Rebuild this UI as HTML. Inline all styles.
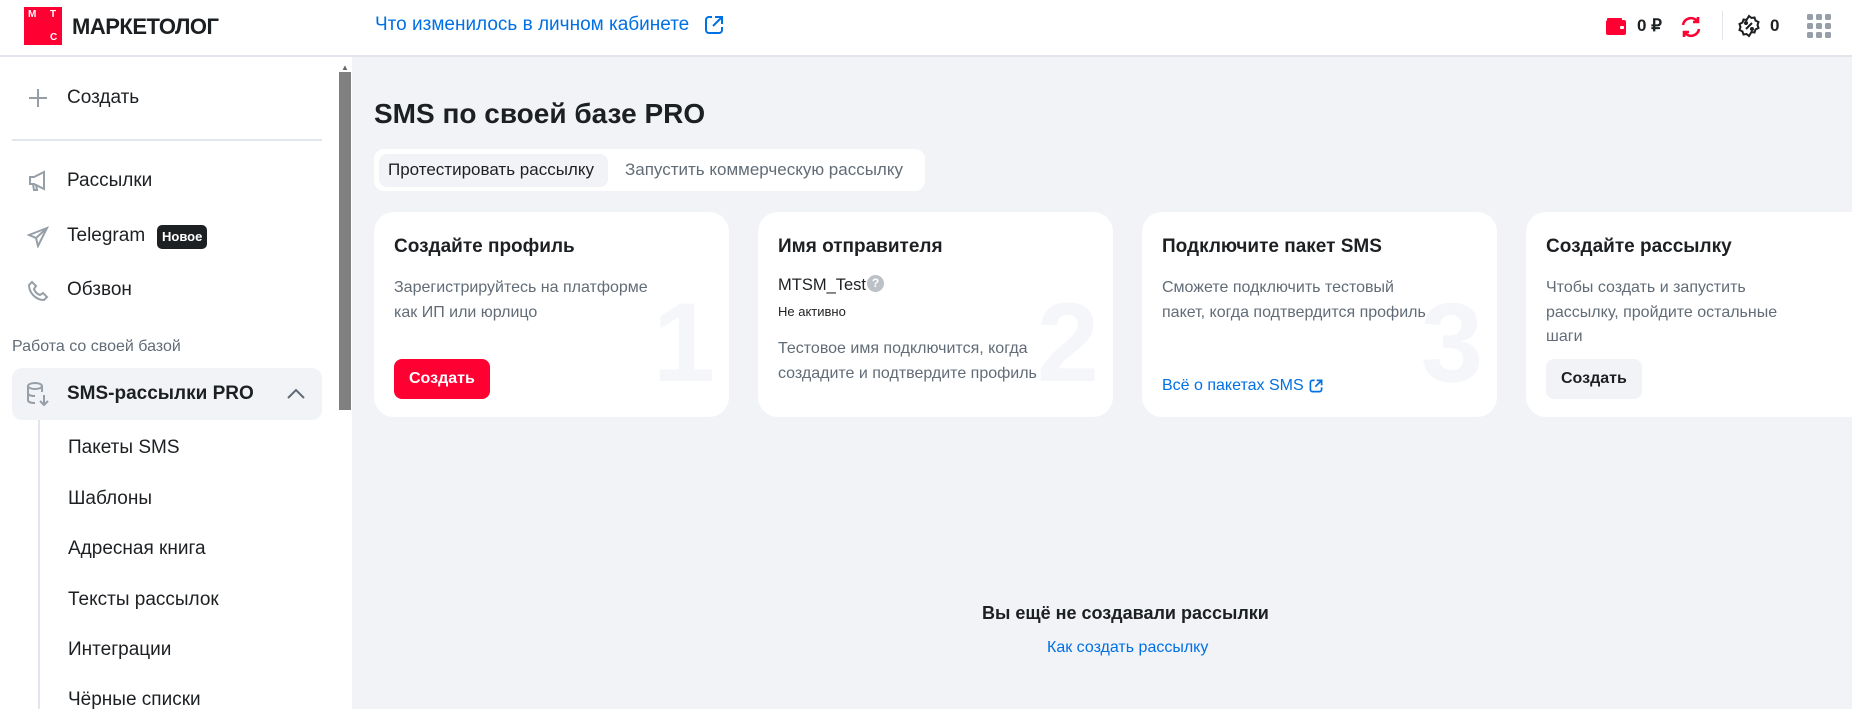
<!DOCTYPE html>
<html><head><meta charset="utf-8"><style>
*{box-sizing:border-box;margin:0;padding:0}
html,body{overflow:hidden}
body{width:1852px;height:709px;font-family:"Liberation Sans","Noto Sans CJK SC",sans-serif;color:#1d2023;background:#f2f3f7;position:relative}
.a{position:absolute;white-space:nowrap}
header{position:absolute;left:0;top:0;width:1852px;height:57px;background:#fff;border-bottom:2px solid #e2e5eb}
.side{position:absolute;left:0;top:57px;width:352px;height:670px;background:#fff}
.si{font-size:19px;color:#1d2023}
.card{position:absolute;top:212px;width:355px;height:205px;background:#fff;border-radius:20px;overflow:hidden}
.ct{position:absolute;left:20px;top:24px;font-size:19px;font-weight:bold}
.cd{position:absolute;left:20px;top:64px;font-size:16px;line-height:24.5px;color:#626c77}
.num{position:absolute;right:14px;bottom:18px;font-size:112px;font-weight:bold;color:#f5f6f9;line-height:1}
.btn{position:absolute;left:20px;top:147px;height:40px;padding:0 15px;border-radius:8px;font-size:16px;font-weight:bold;line-height:40px}
</style></head><body>
<header>
 <div class="a" style="left:24px;top:7px;width:38px;height:38px;background:#ff0032;color:#fff;font-size:10px;font-weight:bold">
  <span class="a" style="left:4px;top:2px">М</span><span class="a" style="left:26px;top:2px">Т</span><span class="a" style="left:26px;top:25px">С</span></div>
 <div class="a" style="left:72px;top:14px;font-size:22px;font-weight:bold;letter-spacing:-0.5px">МАРКЕТОЛОГ</div>
 <div class="a" style="left:375px;top:14px;font-size:19px;color:#0070e5">Что изменилось в личном кабинете</div>
 <svg class="a" style="left:704px;top:15px" width="20" height="20" viewBox="0 0 20 20" fill="none" stroke="#0070e5" stroke-width="2"><path d="M8 2H5a3 3 0 0 0-3 3v10a3 3 0 0 0 3 3h10a3 3 0 0 0 3-3v-3"/><path d="M11 2h7v7M18 2l-9 9"/></svg>
 <svg class="a" style="left:1606px;top:18px" width="20" height="17" viewBox="0 0 20 17"><rect x="0" y="2" width="20" height="15" rx="2" fill="#ff0032"/><rect x="1" y="0" width="15" height="4" rx="1" fill="#ff0032"/><rect x="14" y="8" width="4" height="3" rx="1" fill="#fff"/></svg>
 <div class="a" style="left:1637px;top:16px;font-size:17px;font-weight:bold">0 ₽</div>
 <svg class="a" style="left:1679px;top:15px" width="24" height="24" viewBox="0 0 24 24" fill="none" stroke="#ff0032" stroke-width="2.6"><path d="M4 10a8 8 0 0 1 14-4"/><path d="M20 14a8 8 0 0 1-14 4"/><path d="M19 2v5h-5M5 22v-5h5"/></svg>
 <div class="a" style="left:1722px;top:11px;width:1px;height:29px;background:#e2e5eb"></div>
 <svg class="a" style="left:1737px;top:14px" width="24" height="24" viewBox="0 0 24 24" fill="none" stroke="#1d2023" stroke-width="2"><path d="M12 2l2.5 2 3-.5 1 3 3 1.5-1 3 1 3-3 1.5-1 3-3-.5L12 22l-2.5-2-3 .5-1-3-3-1.5 1-3-1-3 3-1.5 1-3 3 .5z"/><path d="M9 15l6-6"/><circle cx="9" cy="9" r="1" fill="#1d2023"/><circle cx="15" cy="15" r="1" fill="#1d2023"/></svg>
 <div class="a" style="left:1770px;top:16px;font-size:17px;font-weight:bold">0</div>
 <svg class="a" style="left:1807px;top:14px" width="24" height="24" viewBox="0 0 24 24" fill="#969fa8"><rect x="0" y="0" width="6" height="6" rx="1.5"/><rect x="9" y="0" width="6" height="6" rx="1.5"/><rect x="18" y="0" width="6" height="6" rx="1.5"/><rect x="0" y="9" width="6" height="6" rx="1.5"/><rect x="9" y="9" width="6" height="6" rx="1.5"/><rect x="18" y="9" width="6" height="6" rx="1.5"/><rect x="0" y="18" width="6" height="6" rx="1.5"/><rect x="9" y="18" width="6" height="6" rx="1.5"/><rect x="18" y="18" width="6" height="6" rx="1.5"/></svg>
</header>
<div class="side">
 <div class="a" style="left:339px;top:15px;width:12px;height:338px;background:#808080"></div>
 <div class="a" style="left:341px;top:6px;font-size:8px;color:#666">▲</div>
 <svg class="a" style="left:28px;top:31px" width="20" height="20" viewBox="0 0 20 20" stroke="#969fa8" stroke-width="2"><path d="M10 1v18M1 10h18"/></svg>
 <div class="a si" style="left:67px;top:30px">Создать</div>
 <div class="a" style="left:12px;top:82px;width:310px;height:2px;background:#e2e5eb"></div>
 <svg class="a" style="left:27px;top:113px" width="22" height="22" viewBox="0 0 22 22" fill="none" stroke="#969fa8" stroke-width="2"><path d="M3 7h4l10-5v17L7 14H3z"/><path d="M6 14l1 6h3l-1-6"/></svg>
 <div class="a si" style="left:67px;top:113px">Рассылки</div>
 <svg class="a" style="left:27px;top:169px" width="22" height="22" viewBox="0 0 22 22" fill="none" stroke="#969fa8" stroke-width="2"><path d="M20 2L2 9l7 3 2 8z"/><path d="M9 12l11-10"/></svg>
 <div class="a si" style="left:67px;top:168px">Telegram</div>
 <div class="a" style="left:157px;top:168px;height:24px;padding:0 5px;background:#1d2023;color:#fff;border-radius:5px;font-size:13px;font-weight:bold;line-height:24px">Новое</div>
 <svg class="a" style="left:27px;top:223px" width="22" height="22" viewBox="0 0 22 22" fill="none" stroke="#969fa8" stroke-width="2"><path d="M5 2l4 4-2 3c1 3 3 5 6 6l3-2 4 4-3 3C9 20 2 13 2 5z"/></svg>
 <div class="a si" style="left:67px;top:222px">Обзвон</div>
 <div class="a" style="left:12px;top:281px;font-size:16px;color:#626c77">Работа со своей базой</div>
 <div class="a" style="left:12px;top:311px;width:310px;height:52px;background:#f2f3f7;border-radius:10px"></div>
 <svg class="a" style="left:26px;top:324px" width="24" height="26" viewBox="0 0 24 26" fill="none" stroke="#969fa8" stroke-width="2"><ellipse cx="9" cy="5" rx="7" ry="3"/><path d="M2 5v14c0 2 3 3 7 3M16 5v6M2 12c0 2 3 3 7 3"/><path d="M18 14v10M14 20l4 4 4-4"/></svg>
 <div class="a" style="left:67px;top:326px;font-size:19px;font-weight:bold">SMS-рассылки PRO</div>
 <svg class="a" style="left:287px;top:331px" width="18" height="12" viewBox="0 0 18 12" fill="none" stroke="#626c77" stroke-width="2"><path d="M1 10l8-8 8 8"/></svg>
 <div class="a" style="left:38px;top:363px;width:2px;height:300px;background:#e2e5eb"></div>
 <div class="a si" style="left:68px;top:380px">Пакеты SMS</div>
 <div class="a si" style="left:68px;top:431px">Шаблоны</div>
 <div class="a si" style="left:68px;top:481px">Адресная книга</div>
 <div class="a si" style="left:68px;top:532px">Тексты рассылок</div>
 <div class="a si" style="left:68px;top:582px">Интеграции</div>
 <div class="a si" style="left:68px;top:632px">Чёрные списки</div>
</div>
<div class="a" style="left:374px;top:98px;font-size:28px;font-weight:bold">SMS по своей базе PRO</div>
<div class="a" style="left:374px;top:149px;width:551px;height:42px;background:#fff;border-radius:10px">
 <div class="a" style="left:5px;top:5px;width:229px;height:33px;background:#f2f3f7;border-radius:8px"></div>
 <div class="a" style="left:14px;top:11px;font-size:17px">Протестировать рассылку</div>
 <div class="a" style="left:251px;top:11px;font-size:17px;color:#626c77">Запустить коммерческую рассылку</div>
</div>
<div class="card" style="left:374px"><div class="num">1</div><div class="ct">Создайте профиль</div><div class="cd">Зарегистрируйтесь на платформе<br>как ИП или юрлицо</div><div class="btn" style="background:#ff0032;color:#fff">Создать</div></div>
<div class="card" style="left:758px"><div class="num">2</div><div class="ct">Имя отправителя</div>
 <div class="a" style="left:20px;top:64px;font-size:16.5px">MTSM_Test</div>
 <div class="a" style="left:109px;top:63px;width:17px;height:17px;border-radius:50%;background:#bbc1c7;color:#fff;font-size:12px;font-weight:bold;text-align:center;line-height:17px">?</div>
 <div class="a" style="left:20px;top:92px;font-size:13px">Не активно</div>
 <div class="cd" style="top:125px">Тестовое имя подключится, когда<br>создадите и подтвердите профиль</div></div>
<div class="card" style="left:1142px"><div class="num">3</div><div class="ct">Подключите пакет SMS</div><div class="cd">Сможете подключить тестовый<br>пакет, когда подтвердится профиль</div>
 <div class="a" style="left:20px;top:165px;font-size:16px;color:#0070e5">Всё о пакетах SMS</div>
 <svg class="a" style="left:167px;top:167px" width="14" height="14" viewBox="0 0 20 20" fill="none" stroke="#0070e5" stroke-width="2.4"><path d="M8 2H5a3 3 0 0 0-3 3v10a3 3 0 0 0 3 3h10a3 3 0 0 0 3-3v-3"/><path d="M11 2h7v7M18 2l-9 9"/></svg></div>
<div class="card" style="left:1526px;width:400px"><div class="num" style="right:auto;left:330px">4</div><div class="ct">Создайте рассылку</div><div class="cd">Чтобы создать и запустить<br>рассылку, пройдите остальные<br>шаги</div><div class="btn" style="background:#f2f3f7;color:#1d2023">Создать</div></div>
<div class="a" style="left:982px;top:603px;font-size:18px;font-weight:bold">Вы ещё не создавали рассылки</div>
<div class="a" style="left:1047px;top:639px;font-size:16px;color:#0070e5">Как создать рассылку</div>
</body></html>
